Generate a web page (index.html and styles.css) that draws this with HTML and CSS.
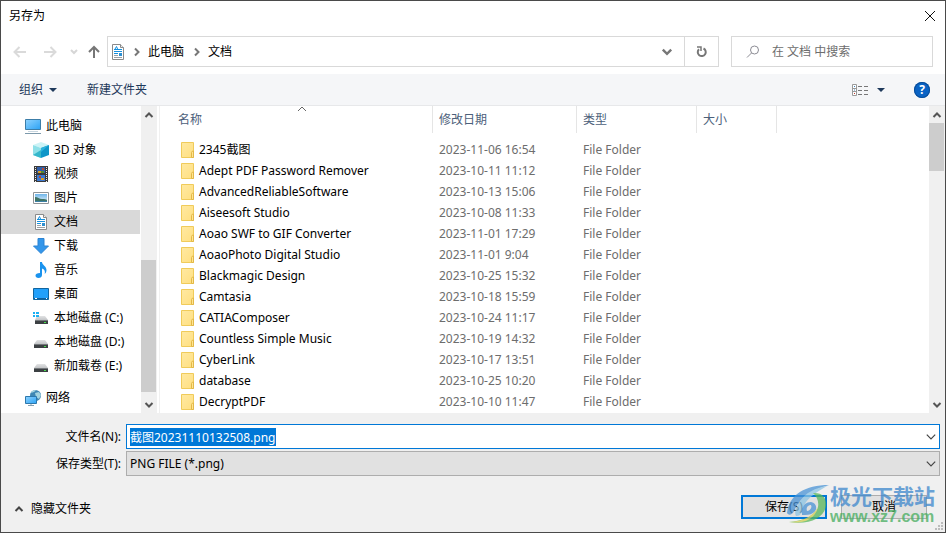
FILE: index.html
```
<!DOCTYPE html>
<html lang="zh-CN">
<head>
  <meta charset="UTF-8">
  <meta name="viewport" content="width=device-width, initial-scale=1.0">
  <title>另存为</title>
  <link rel="stylesheet" href="styles.css">
</head>
<body>
  <!-- shared icons -->
  <svg class="sprite" width="0" height="0" aria-hidden="true">
    <defs>
      <linearGradient id="gFolder" x1="0" y1="0" x2="1" y2="1">
        <stop offset="0" stop-color="#ffe9a2"/><stop offset="1" stop-color="#ffdf80"/>
      </linearGradient>
      <linearGradient id="gScreen" x1="0" y1="0" x2="1" y2="1">
        <stop offset="0" stop-color="#8fd3ff"/><stop offset="1" stop-color="#2ba2f5"/>
      </linearGradient>
      <linearGradient id="gSky" x1="0" y1="0" x2="0" y2="1">
        <stop offset="0" stop-color="#6fb6ea"/><stop offset="1" stop-color="#e6f2fa"/>
      </linearGradient>
      <linearGradient id="gDisk" x1="0" y1="0" x2="0" y2="1">
        <stop offset="0" stop-color="#e2e3e4"/><stop offset="1" stop-color="#c2c4c6"/>
      </linearGradient>
    </defs>
    <symbol id="i-folder" viewBox="0 0 14 16">
      <path d="M.5.5h12v15H.5z" fill="url(#gFolder)" stroke="#f0cb5a"/>
      <path d="M10.500 15.500v-5l1-1.500h1v6.500z" fill="#ffe590" stroke="#e3b848"/>
    </symbol>
    <symbol id="i-doc" viewBox="0 0 16 16">
      <path d="M2.500.5h8l3 3v12h-11z" fill="#fff" stroke="#8a8a8a"/>
      <path d="M10.500.5v3h3" fill="#eee" stroke="#8a8a8a"/>
      <path d="M4.500 6L6.500 2.500 8 6M4 5.500h8M4 7.500h8M4 9.500h4" stroke="#1490df" fill="none"/>
      <path d="M9 9h3v3H9z" fill="#2d8fd0"/>
      <path d="M4 11.500h4M4 13.500h8" stroke="#9aa0a5" fill="none"/>
    </symbol>
    <symbol id="i-pc" viewBox="0 0 16 16">
      <path d="M.5 1.500h15v10H.5z" fill="url(#gScreen)" stroke="#3c7da8"/>
      <path d="M0 15.500h16" stroke="#7d99ab"/><path d="M3 13.500h10" stroke="#c8d6df"/>
    </symbol>
    <symbol id="i-cube" viewBox="0 0 16 16">
      <path d="M0 3l8-3 8 3-8 3z" fill="#cdf3f6"/>
      <path d="M0 3l8 3v10l-8-3z" fill="#8fe0e8"/>
      <path d="M0 13l8-5v8z" fill="#35b7cb"/>
      <path d="M16 3L8 6v10l8-3z" fill="#0f96c8"/>
      <path d="M16 3L8 6v4z" fill="#2bb3dc"/>
    </symbol>
    <symbol id="i-video" viewBox="0 0 16 16">
      <path d="M1 0h14v16H1z" fill="#3b3b3b"/>
      <path d="M4 1h8v6H4z" fill="#315ea8"/><path d="M4 9h8v6H4z" fill="#3d79d0"/>
      <path d="M5 5h3v2H5zM8 12h3v2H8z" fill="#d99a23"/><path d="M9 2h2v2H9zM6 10h2v2H6z" fill="#b94b2f"/>
      <path d="M8 5h3v2H8z" fill="#508b35"/>
      <path d="M2.500 1v15M13.500 1v15" stroke="#eee" stroke-dasharray="1 1"/>
    </symbol>
    <symbol id="i-image" viewBox="0 0 16 16">
      <path d="M.5 2.500h15v11H.5z" fill="#fff" stroke="#8f9498"/>
      <path d="M2 4h12v8H2z" fill="url(#gSky)"/>
      <path d="M2 7c3 0 4 2 7 2s4 0 5 1v2H2z" fill="#3f7466"/><path d="M2 11h12v1H2z" fill="#3b7fa6"/>
    </symbol>
    <symbol id="i-down" viewBox="0 0 16 16">
      <path d="M5 .5h6V8h4.500L8 15.500.5 8H5z" fill="#3396ea" stroke="#2a83d3"/>
    </symbol>
    <symbol id="i-music" viewBox="0 0 16 16">
      <path d="M7 0h2c0 3 4.500 4 4.500 8 0 2-.8 3-1.800 4 .7-3-.2-4.500-2.700-5.500V13c0 2-1.500 3-3.500 3S2.500 15 2.500 13.500 4 11 7 11z" fill="#1a93ee"/>
    </symbol>
    <symbol id="i-desktop" viewBox="0 0 16 16">
      <path d="M.5 2.500h15v11H.5z" fill="#22a0fa" stroke="#11659f"/>
      <path d="M1 12.500h14" stroke="#0f5f9c"/><path d="M2 12.500h2M13 12.500h1" stroke="#fff"/>
    </symbol>
    <symbol id="i-disk" viewBox="0 0 16 16">
      <path d="M4 6h8l3 4H1z" fill="url(#gDisk)"/>
      <path d="M1 10h14v4H1z" fill="#3c4043"/><path d="M1 10h14v1H1z" fill="#75797c"/>
      <path d="M11 12h2v1h-2z" fill="#46e04c"/>
    </symbol>
    <symbol id="i-diskwin" viewBox="0 0 16 16">
      <path d="M4 6h8l3 4H2z" fill="url(#gDisk)"/>
      <path d="M2 10h13v4H2z" fill="#3c4043"/><path d="M2 10h13v1H2z" fill="#75797c"/>
      <path d="M11 12h2v1h-2z" fill="#46e04c"/>
      <path d="M0 2h2v2H0zM3 2h3v2H3zM0 5h2v2H0zM3 5h3v2H3z" fill="#1cb0f2"/>
    </symbol>
    <symbol id="i-net" viewBox="0 0 16 16">
      <circle cx="10.500" cy="5.500" r="5.500" fill="#3f87b4"/>
      <path d="M6 3c2-1 4-1 5-3-3 0-4.500 1-5 3zM10 3l4-1 2 3-2 4-3-2z" fill="#a4d3df"/>
      <path d="M.5 6.500h11v7H.5z" fill="url(#gScreen)" stroke="#2d78ac"/>
      <path d="M3 15.500h6M6 14v1" stroke="#86a0b0"/>
    </symbol>
    <symbol id="i-chev" viewBox="0 0 10 10">
      <path d="M1.500 3L5 6.500 8.500 3" fill="none" stroke="currentColor"/>
    </symbol>
    <symbol id="i-chevbold" viewBox="0 0 10 10">
      <path d="M1.500 3L5 6.500 8.500 3" fill="none" stroke="currentColor" stroke-width="2"/>
    </symbol>
  </svg>

  <div class="dialog">
    <header class="titlebar">
      <h1>另存为</h1>
      <button class="close" aria-label="关闭">
        <svg width="12" height="12"><path d="M1 1l10 10M11 1L1 11" stroke="#111" fill="none"/></svg>
      </button>
    </header>

    <div class="navbar">
      <div class="history">
        <button aria-label="后退" disabled><svg width="14" height="12"><path d="M13 6H2M6.500 1L1.500 6l5 5" stroke="#dadada" stroke-width="2" fill="none"/></svg></button>
        <button aria-label="前进" disabled><svg width="14" height="12"><path d="M1 6h11M7.500 1l5 5-5 5" stroke="#dadada" stroke-width="2" fill="none"/></svg></button>
        <button class="recent" aria-label="最近浏览的位置" disabled><svg width="8" height="8"><path d="M1 2l3 3 3-3" stroke="#d6d6d6" stroke-width="2" fill="none"/></svg></button>
        <button class="up" aria-label="上移"><svg width="12" height="14"><path d="M6 13V2M1 7l5-5 5 5" stroke="#767676" stroke-width="2" fill="none"/></svg></button>
      </div>
      <div class="address">
        <div class="crumbs">
          <svg width="16" height="16"><use href="#i-doc"/></svg>
          <svg class="right" width="10" height="10"><use href="#i-chevbold"/></svg>
          <a href="#">此电脑</a>
          <svg class="right" width="10" height="10"><use href="#i-chevbold"/></svg>
          <a href="#">文档</a>
        </div>
        <button class="drop" aria-label="以前的位置"><svg width="12" height="12"><use href="#i-chevbold"/></svg></button>
        <button class="refresh" aria-label="刷新">
          <svg width="12" height="12"><path d="M7.500 2.500A4 4 0 1 1 3 3.200" fill="none" stroke="#777" stroke-width="2"/><path d="M1 1h4v4" fill="none" stroke="#777" stroke-width="1.500"/></svg>
        </button>
      </div>
      <label class="search">
        <svg width="14" height="14"><circle cx="8.500" cy="5" r="4" fill="none" stroke="#8c8c94"/><path d="M5.500 8L1 12.500" stroke="#8c8c94"/></svg>
        <input type="text" placeholder="在 文档 中搜索" aria-label="搜索">
      </label>
    </div>

    <div class="toolbar">
      <button>组织 <svg width="8" height="4"><path d="M0 0h8L4 4z" fill="#1e395b"/></svg></button>
      <button class="new-folder">新建文件夹</button>
      <button class="view" aria-label="更改视图">
        <svg width="17" height="12"><path d="M.5.5h4v11h-4zM.5 4.500h4M.5 7.500h4" fill="#fff" stroke="#999"/><path d="M2 2h1v1H2zM2 5.500h1v1H2z" fill="#3c83bd"/><path d="M2 9h1v1H2z" fill="#c0392b"/><path d="M6 2.500h4M12 2.500h4M6 6.500h4M12 6.500h4M6 10.500h4M12 10.500h4" stroke="#777"/></svg>
        <svg width="8" height="4"><path d="M0 0h8L4 4z" fill="#1e395b"/></svg>
      </button>
      <button class="help" aria-label="帮助">?</button>
    </div>

    <div class="content">
      <nav class="tree">
        <ul>
          <li><a href="#"><svg width="16" height="16"><use href="#i-pc"/></svg>此电脑</a></li>
          <li class="sub"><a href="#"><svg width="16" height="16"><use href="#i-cube"/></svg>3D 对象</a></li>
          <li class="sub"><a href="#"><svg width="16" height="16"><use href="#i-video"/></svg>视频</a></li>
          <li class="sub"><a href="#"><svg width="16" height="16"><use href="#i-image"/></svg>图片</a></li>
          <li class="sub active"><a href="#"><svg width="16" height="16"><use href="#i-doc"/></svg>文档</a></li>
          <li class="sub"><a href="#"><svg width="16" height="16"><use href="#i-down"/></svg>下载</a></li>
          <li class="sub"><a href="#"><svg width="16" height="16"><use href="#i-music"/></svg>音乐</a></li>
          <li class="sub"><a href="#"><svg width="16" height="16"><use href="#i-desktop"/></svg>桌面</a></li>
          <li class="sub"><a href="#"><svg width="16" height="16"><use href="#i-diskwin"/></svg>本地磁盘 (C:)</a></li>
          <li class="sub"><a href="#"><svg width="16" height="16"><use href="#i-disk"/></svg>本地磁盘 (D:)</a></li>
          <li class="sub"><a href="#"><svg width="16" height="16"><use href="#i-disk"/></svg>新加载卷 (E:)</a></li>
          <li class="network"><a href="#"><svg width="16" height="16"><use href="#i-net"/></svg>网络</a></li>
        </ul>
      </nav>
      <div class="scrollbar scrollbar-tree">
        <svg class="flip" width="10" height="10"><use href="#i-chevbold"/></svg>
        <div class="track"><div class="thumb"></div></div>
        <svg width="10" height="10"><use href="#i-chevbold"/></svg>
      </div>

      <div class="files">
        <table>
          <thead>
            <tr>
              <th class="name">名称<svg class="sort" width="10" height="6"><path d="M1 5l4-4 4 4" fill="none" stroke="#666"/></svg></th>
              <th class="date">修改日期</th>
              <th class="type">类型</th>
              <th class="size">大小</th>
              <th></th>
            </tr>
          </thead>
          <tbody>
            <tr><td><svg width="14" height="16"><use href="#i-folder"/></svg>2345截图</td><td>2023-11-06 16:54</td><td>File Folder</td><td></td><td></td></tr>
            <tr><td><svg width="14" height="16"><use href="#i-folder"/></svg>Adept PDF Password Remover</td><td>2023-10-11 11:12</td><td>File Folder</td><td></td><td></td></tr>
            <tr><td><svg width="14" height="16"><use href="#i-folder"/></svg>AdvancedReliableSoftware</td><td>2023-10-13 15:06</td><td>File Folder</td><td></td><td></td></tr>
            <tr><td><svg width="14" height="16"><use href="#i-folder"/></svg>Aiseesoft Studio</td><td>2023-10-08 11:33</td><td>File Folder</td><td></td><td></td></tr>
            <tr><td><svg width="14" height="16"><use href="#i-folder"/></svg>Aoao SWF to GIF Converter</td><td>2023-11-01 17:29</td><td>File Folder</td><td></td><td></td></tr>
            <tr><td><svg width="14" height="16"><use href="#i-folder"/></svg>AoaoPhoto Digital Studio</td><td>2023-11-01 9:04</td><td>File Folder</td><td></td><td></td></tr>
            <tr><td><svg width="14" height="16"><use href="#i-folder"/></svg>Blackmagic Design</td><td>2023-10-25 15:32</td><td>File Folder</td><td></td><td></td></tr>
            <tr><td><svg width="14" height="16"><use href="#i-folder"/></svg>Camtasia</td><td>2023-10-18 15:59</td><td>File Folder</td><td></td><td></td></tr>
            <tr><td><svg width="14" height="16"><use href="#i-folder"/></svg>CATIAComposer</td><td>2023-10-24 11:17</td><td>File Folder</td><td></td><td></td></tr>
            <tr><td><svg width="14" height="16"><use href="#i-folder"/></svg>Countless Simple Music</td><td>2023-10-19 14:32</td><td>File Folder</td><td></td><td></td></tr>
            <tr><td><svg width="14" height="16"><use href="#i-folder"/></svg>CyberLink</td><td>2023-10-17 13:51</td><td>File Folder</td><td></td><td></td></tr>
            <tr><td><svg width="14" height="16"><use href="#i-folder"/></svg>database</td><td>2023-10-25 10:20</td><td>File Folder</td><td></td><td></td></tr>
            <tr><td><svg width="14" height="16"><use href="#i-folder"/></svg>DecryptPDF</td><td>2023-10-10 11:47</td><td>File Folder</td><td></td><td></td></tr>
          </tbody>
        </table>
      </div>
      <div class="scrollbar scrollbar-files">
        <svg class="flip" width="10" height="10"><use href="#i-chevbold"/></svg>
        <div class="track"><div class="thumb"></div></div>
        <svg width="10" height="10"><use href="#i-chevbold"/></svg>
      </div>
    </div>

    <footer>
      <div class="fields">
        <label for="filename">文件名(N):</label>
        <div class="combo">
          <input type="text" id="filename" value="截图20231110132508.png">
          <svg width="12" height="12"><use href="#i-chev"/></svg>
        </div>
        <label for="filetype">保存类型(T):</label>
        <div class="combo">
          <select id="filetype"><option>PNG FILE (*.png)</option></select>
          <svg width="12" height="12"><use href="#i-chev"/></svg>
        </div>
      </div>
      <div class="actions">
        <button class="hide-folders"><svg class="flip" width="10" height="10"><use href="#i-chevbold"/></svg>隐藏文件夹</button>
        <button class="btn primary">保存(S)</button>
        <button class="btn">取消</button>
      </div>
      <div class="watermark">
        <svg width="44" height="42" viewBox="0 0 44 42">
          <path d="M1 29C3 12 17 1 43 1 29 5 15 12 9 25c-2 6-6 7-8 4z" fill="#4a93d6"/>
          <path d="M13 19C19 8 30 4 41 2 31 8 21 14 18 22c-3 6-2 10-8 10-2-4 0-8 3-13z" fill="#8cc4e4"/>
          <path d="M16 31c-1-8 3-13 9-13 6 1 7 8 2 11-3 2-7 2-11 2zm5-4c4 0 6-6 3-6-3 1-4 3-3 6z" fill="#4a93d6"/>
          <path d="M27 9c9-1 14 5 13 13C38 34 24 41 3 38c14-1 27-6 29-15 1-6-1-10-5-14z" fill="#58b75b"/>
          <path d="M3 38c12 0 24-5 29-15-3 12-13 17-29 15z" fill="#d6d052"/>
        </svg>
        <div class="wm-text">
          <strong>极光下载站</strong>
          <span>www.xz7.com</span>
        </div>
      </div>
      <svg class="grip" width="8" height="8"><path d="M6 0h2v2H6zM3 3h2v2H3zM6 3h2v2H6zM0 6h2v2H0zM3 6h2v2H3zM6 6h2v2H6z" fill="#bcbcbc"/></svg>
    </footer>
  </div>

  <script>
    // the file name is preselected so typing replaces it
    const filename = document.getElementById('filename');
    filename.focus();
    filename.select();
  </script>
</body>
</html>
```
FILE: styles.css
```
* {
  box-sizing: border-box;
}
body {
  margin: 0;
  font-family: "Noto Sans", "Noto Sans CJK SC", sans-serif;
  font-size: 12px;
  line-height: 20px;
  color: #000;
}
button, input, select {
  font: inherit;
  color: inherit;
  margin: 0;
  padding: 0;
  border: none;
  background: none;
  border-radius: 0;
}
a {
  color: inherit;
  text-decoration: none;
}
svg {
  display: block;
  flex-shrink: 0;
}
.sprite {
  position: absolute;
}
.flip {
  transform: rotate(180deg);
}
.dialog {
  display: flex;
  flex-direction: column;
  min-height: 100vh;
  border: 1px solid #4a4a4a;
  background: #fff;
}

/* title and address */
.titlebar {
  display: flex;
  align-items: center;
  justify-content: space-between;
  height: 29px;
  padding: 0 9px 0 8px;
}
.titlebar h1 {
  margin: 0;
  font-size: 12px;
  font-weight: normal;
}
.navbar {
  display: flex;
  height: 44px;
  padding: 6px 12px 7px 0;
}
.history {
  display: flex;
  align-items: center;
  width: 106px;
  padding-left: 12px;
}
.history button {
  width: 30px;
}
.history .recent {
  width: 15px;
}
.history .up {
  width: 16px;
}
.history .recent svg {
  margin-left: -3px;
}
.address {
  display: flex;
  flex: 1;
  border: 1px solid #d9d9d9;
}
.crumbs {
  display: flex;
  flex: 1;
  align-items: center;
  gap: 6px;
  padding-left: 2px;
  color: #000;
}
.crumbs a {
  margin-right: 2px;
}
.right {
  transform: rotate(-90deg);
  color: #777;
}
.address button {
  display: flex;
  align-items: center;
  justify-content: center;
  width: 34px;
  color: #777;
}
.address .refresh {
  border-left: 1px solid #d9d9d9;
}
.search {
  display: flex;
  align-items: center;
  gap: 12px;
  width: 202px;
  margin-left: 12px;
  padding-left: 14px;
  border: 1px solid #d9d9d9;
}
.search input {
  flex: 1;
  min-width: 0;
  outline: none;
}
.search input::placeholder {
  color: #6d6d6d;
}

/* command bar */
.toolbar {
  display: flex;
  align-items: center;
  height: 32px;
  padding: 0 15px 0 18px;
  background: #f5f6f8;
  border-bottom: 1px solid #e7e8ea;
  color: #1e395b;
}
.toolbar button {
  display: flex;
  align-items: center;
  gap: 6px;
}
.toolbar .new-folder {
  margin-left: 30px;
}
.toolbar .view {
  gap: 8px;
  margin-left: auto;
}
.toolbar .help {
  justify-content: center;
  width: 16px;
  height: 16px;
  margin-left: 29px;
  border-radius: 50%;
  background: #0a63c4;
  box-shadow: inset 0 0 0 1px #084c98;
  color: #fff;
  font-weight: bold;
  line-height: 16px;
}

/* folder tree */
.content {
  display: flex;
  flex: 1;
}
.tree {
  width: 139px;
  margin-right: 1px;
  padding-top: 8px;
}
.tree ul {
  list-style: none;
  margin: 0;
  padding: 0;
}
.tree a {
  display: flex;
  align-items: center;
  gap: 5px;
  height: 24px;
  padding-left: 24px;
  white-space: nowrap;
}
.tree .sub a {
  padding-left: 32px;
}
.tree .active {
  background: #d9d9d9;
}
.tree .network {
  margin-top: 8px;
}
.scrollbar {
  display: flex;
  flex-direction: column;
  align-items: center;
  justify-content: space-between;
  width: 16px;
  padding: 4px 0 3px;
  background: #f0f0f0;
  color: #555;
}
.track {
  display: flex;
  flex-direction: column;
  flex: 1;
  width: 100%;
  margin: 3px 0 8px;
}
.thumb {
  background: #cdcdcd;
  margin-right: 1px;
}
.scrollbar-tree .thumb {
  height: 49%;
  margin-top: auto;
}
.scrollbar-files .thumb {
  height: 18%;
}

/* file list */
.files {
  flex: 1;
  margin-left: 2px;
  border-left: 1px solid #f0f0f0;
}
.files table {
  width: 100%;
  table-layout: fixed;
  border-collapse: separate;
  border-spacing: 0;
}
.files th {
  height: 27px;
  padding: 0 6px;
  border-right: 1px solid #e5e5e5;
  color: #4c607a;
  font-weight: normal;
  text-align: left;
}
.files th:last-child {
  border-right: none;
}
.files .name {
  position: relative;
  width: 273px;
  padding-left: 18px;
}
.files .date {
  width: 144px;
}
.files .type {
  width: 120px;
}
.files .size {
  width: 80px;
}
.sort {
  position: absolute;
  top: 0;
  left: calc(50% + 1px);
}
.files tbody::before {
  content: "";
  display: block;
  height: 6px;
}
.files td {
  height: 21px;
  padding: 0 6px;
  color: #6d6d6d;
  white-space: nowrap;
}
.files td:first-child {
  padding-left: 21px;
  color: #000;
}
.files td svg {
  display: inline-block;
  margin-right: 4px;
  vertical-align: middle;
}

/* file name, type and buttons */
footer {
  position: relative;
  padding: 11px 5px 13px 13px;
  background: #f0f0f0;
}
.fields {
  display: grid;
  grid-template-columns: 107px 1fr;
  column-gap: 5px;
  row-gap: 2px;
  align-items: center;
}
.fields label {
  text-align: right;
}
.combo {
  display: grid;
  align-items: center;
}
.combo > * {
  grid-area: 1 / 1;
}
.combo svg {
  justify-self: end;
  margin-right: 3px;
  color: #444;
  pointer-events: none;
}
.combo input, .combo select {
  width: 100%;
  height: 25px;
  padding: 0 20px 0 3px;
  outline: none;
  appearance: none;
}
.combo input {
  border: 1px solid #0078d7;
  background: #fff;
}
.combo input::selection {
  background: #0078d7;
  color: #fff;
}
.combo select {
  border: 1px solid #adadad;
  background: #e1e1e1;
}
.actions {
  display: flex;
  align-items: center;
  gap: 14px;
  margin-top: 19px;
  padding-right: 13px;
}
.hide-folders {
  display: flex;
  align-items: center;
  gap: 7px;
  margin-right: auto;
  padding-top: 4px;
}
.hide-folders svg {
  color: #444;
}
.btn {
  width: 86px;
  height: 24px;
  border: 1px solid #adadad;
  background: #e1e1e1;
}
.btn.primary {
  border: 2px solid #0078d7;
}
.watermark {
  position: absolute;
  right: 10px;
  bottom: 6px;
  display: flex;
  align-items: center;
  opacity: 0.75;
  pointer-events: none;
}
.wm-text {
  display: flex;
  flex-direction: column;
}
.wm-text strong {
  font-size: 21px;
  line-height: 24px;
  color: #3d87cc;
}
.wm-text span {
  font-family: "Liberation Sans", Arial, sans-serif;
  font-size: 16px;
  font-weight: bold;
  line-height: 18px;
  color: #46ad5e;
}
.grip {
  position: absolute;
  right: 2px;
  bottom: 2px;
}
```
